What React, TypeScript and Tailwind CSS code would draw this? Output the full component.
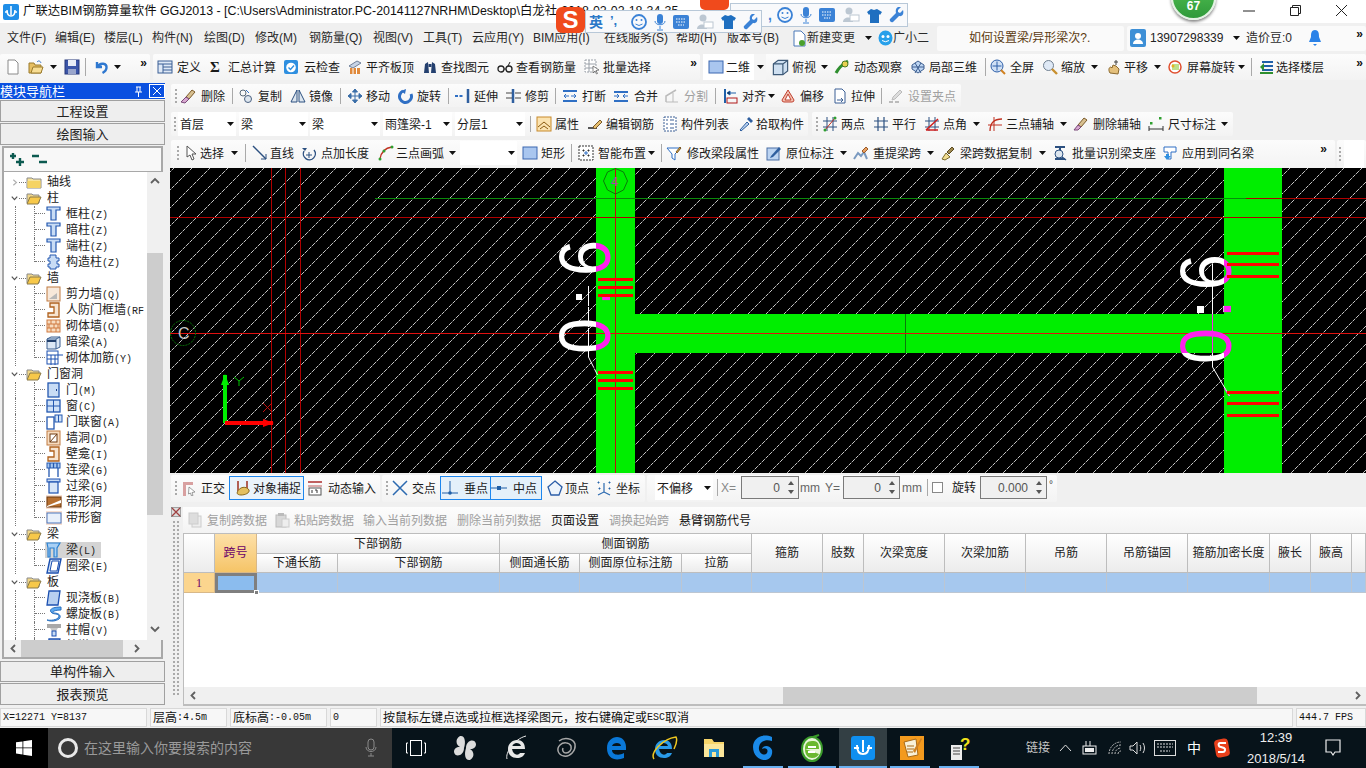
import React from "react";

type N = React.ReactNode;
const Sv = ({ c, s = 16 }: { c: N; s?: number }) => (
  <svg width={s} height={s} viewBox="0 0 16 16" className="shrink-0">{c}</svg>
);

const I: Record<string, N> = {
  new: <Sv c={<path d="M3 1h7l3 3v11H3z" fill="#fff" stroke="#8a8a8a" />} />,
  open: <Sv c={<><path d="M1 4h5l1 2h6v8H1z" fill="#e6bf63" stroke="#9a7a2c" /><path d="M3 14l2-6h10l-2 6z" fill="#f7dd94" stroke="#9a7a2c" /><path d="M9 3c2-2 3-1 4 1" stroke="#2f6fc4" fill="none" /></>} />,
  save: <Sv c={<><rect x="1" y="1" width="14" height="14" fill="#3b55a8" stroke="#27397a" /><rect x="4" y="1" width="8" height="6" fill="#e8ecf6" /><rect x="4" y="10" width="8" height="5" fill="#9aa6cc" /></>} />,
  undo: <Sv c={<path d="M3 3v5h5M3.5 8C6 3 13 4 12.5 9c-.3 2.5-2 4-4 5" fill="none" stroke="#2f78d0" strokeWidth="2.4" />} />,
  def: <Sv c={<><rect x="1" y="2" width="14" height="12" fill="#dfe9f6" stroke="#3a5f95" /><path d="M1 5h14M6 5v9M6 8h9M6 11h9" stroke="#3a5f95" /></>} />,
  sigma: <span className="text-[15px] font-bold leading-none font-['Liberation_Serif',serif]">Σ</span>,
  cloud: <Sv c={<><rect x="1" y="1" width="14" height="14" rx="2" fill="#2e8fe0" /><circle cx="8" cy="8.5" r="4.8" fill="#fff" /><path d="M5.5 8.5l2 2 3.5-4" stroke="#2e8fe0" strokeWidth="1.4" fill="none" /></>} />,
  flush: <Sv c={<><path d="M2 7l8-5 4 2-8 5z" fill="#c8d4e6" stroke="#6f7f99" /><rect x="3" y="9" width="10" height="6" fill="#e08a3c" /><path d="M6 9v6M9.500 9v6" stroke="#fff" /></>} />,
  bino: <Sv c={<><path d="M2 14l1-9 3-2 1 11zM14 14l-1-9-3-2-1 11z" fill="#24406f" /><rect x="6.500" y="5" width="3" height="3" fill="#24406f" /></>} />,
  glass: <Sv c={<><circle cx="4" cy="10" r="3" fill="none" stroke="#222" strokeWidth="1.3" /><circle cx="12" cy="10" r="3" fill="none" stroke="#222" strokeWidth="1.3" /><path d="M7 10h2M11 7l2-4" stroke="#222" /></>} />,
  batch: <Sv c={<><rect x="1" y="1" width="11" height="12" fill="#fff" stroke="#9aa0a8" strokeDasharray="2 1" /><path d="M1 5h11M1 9h11M5 1v12" stroke="#9aa0a8" /><path d="M9 7l6 4-3 .5 1.500 3-1 .5-1.500-3-2 2z" fill="#fff" stroke="#555" strokeWidth=".7" /></>} />,
  square: <Sv c={<rect x="1" y="2" width="14" height="12" fill="#a9c6ef" stroke="#3a66b0" />} />,
  cube: <Sv s={19} c={<><path d="M2 5l4-3h8v9l-4 3H2z" fill="#cfe0f1" stroke="#3e5a78" /><path d="M2 5h8v9M10 5l4-3" fill="none" stroke="#3e5a78" /></>} />,
  orbit: <Sv c={<><path d="M2 14C5 8 9 5 14 2" stroke="#2f8f2f" strokeWidth="3" fill="none" /><circle cx="11" cy="5" r="3" fill="#e8d050" stroke="#4a7a20" /></>} />,
  local3d: <Sv c={<><path d="M2 6l6-4 6 4v4l-6 4-6-4z" fill="#bcd4f2" stroke="#3e5f90" /><path d="M5 4l6 10M11 4L5 14M2 8h12" stroke="#3e5f90" /></>} />,
  full: <Sv c={<><circle cx="7" cy="7" r="6" fill="#cfe0f5" stroke="#2c5ea8" /><path d="M7 2.500v9M2.500 7h9" stroke="#2c5ea8" /><path d="M11 11l4 4" stroke="#d08020" strokeWidth="2" /></>} />,
  zoom: <Sv c={<><circle cx="6.500" cy="6.500" r="5" fill="#dfe9f6" stroke="#6f7f90" /><path d="M10 10l5 5" stroke="#c89030" strokeWidth="2.400" /></>} />,
  pan: <Sv c={<><path d="M4 14c-2-3-1-6 1-6l1 1 1-3 3 1 3 3-1 5z" fill="#e4c07c" stroke="#8c6a30" /><path d="M10 1v5M8 3h4" stroke="#444" /></>} />,
  rot: <Sv c={<><path d="M2 8a6 6 0 0112 0 6 6 0 01-12 0" fill="#fff" stroke="#e05030" strokeWidth="1.500" /><rect x="5" y="5" width="7" height="6" fill="#bfe08c" /><circle cx="6" cy="7" r="1.500" fill="#e8b020" /></>} />,
  floors: <Sv c={<><path d="M3 3h11M3 7h11M3 11h11" stroke="#1f5fa8" strokeWidth="2" /><path d="M1 14h13" stroke="#2f8f2f" strokeWidth="2" /><path d="M1 8l4-4v8z" fill="#2f8f2f" /></>} />,
  del: <Sv c={<><path d="M12 2l3 2-6 7-3-2z" fill="#d8c090" stroke="#7a5a2a" /><path d="M6 9l3 2-4 4-4-1z" fill="#d8a8d0" stroke="#7a4a7a" /></>} />,
  copy: <Sv c={<><circle cx="5" cy="5" r="3" fill="none" stroke="#5a6a7a" /><circle cx="10" cy="11" r="3.500" fill="#dde6ef" stroke="#4a6080" /><path d="M8 2l3 3" stroke="#2f6fc4" /></>} />,
  mirror: <Sv c={<><path d="M7 2L1 14h6zM9 2l6 12H9z" fill="#dde6ef" stroke="#2c5080" /></>} />,
  move: <Sv c={<path d="M8 1v14M1 8h14M8 1L5.500 4h5zM8 15l-2.500-3h5zM1 8l3-2.500v5zM15 8l-3-2.500v5z" fill="#3a6ea8" stroke="#3a6ea8" />} />,
  rotate: <Sv c={<><path d="M5 3a6 6 0 108 3" fill="none" stroke="#2f6fc4" strokeWidth="3" /><path d="M8 1L3 3l4 3z" fill="#2f6fc4" /></>} />,
  extend: <Sv c={<><path d="M0 8h8" stroke="#2f6fc4" strokeWidth="2" strokeDasharray="3 1.500" /><path d="M13 1v14" stroke="#2f5f9f" strokeWidth="2.500" /></>} />,
  trim: <Sv c={<><path d="M7 1v14" stroke="#2f5f9f" strokeWidth="2.500" /><path d="M0 5h6M0 10h6M9 5h6M9 10h6" stroke="#444" /></>} />,
  breakI: <Sv c={<><path d="M1 3h14M1 13h14" stroke="#2f6fc4" strokeWidth="2" /><path d="M2 8h5M9 8h5M4 6l-2 2 2 2M12 6l2 2-2 2" stroke="#2f6fc4" fill="none" /></>} />,
  merge: <Sv c={<><path d="M1 4h14M1 13h14" stroke="#2f6fc4" strokeWidth="2" /><path d="M1 8h5M10 8h5M4 6l2 2-2 2M12 6l-2 2 2 2" stroke="#2f6fc4" fill="none" /></>} />,
  split: <Sv c={<><path d="M2 14V8l10-6" fill="none" stroke="#bbb" strokeWidth="1.500" /><path d="M2 14h12M9 5v9" stroke="#bbb" /></>} />,
  align: <Sv c={<><path d="M3 1v14" stroke="#1f5fa8" strokeWidth="2" /><path d="M7 5h7M5 5l3-2v4z" stroke="#1f5fa8" /><rect x="5" y="10" width="10" height="5" fill="none" stroke="#b01818" /></>} />,
  offset: <Sv c={<><path d="M8 2l6 10a2 2 0 01-2 2H4a2 2 0 01-2-2z" fill="#f3c0b0" stroke="#c04030" /><path d="M8 6l3 6H5z" fill="#fff" stroke="#c04030" /></>} />,
  stretch: <Sv c={<><path d="M3 1h7l3 3v11H3z" fill="#fff" stroke="#3a5f95" /><path d="M5 12h6M9 10l2 2-2 2" stroke="#3a5f95" fill="none" /></>} />,
  grips: <Sv c={<><path d="M12 2l2 2-7 7-3 1 1-3z" fill="#ddd" stroke="#bbb" /><path d="M1 14h4M7 14h4" stroke="#bbb" strokeWidth="2" /></>} />,
  prop: <Sv c={<><rect x="1" y="1" width="14" height="14" fill="#fbe3b0" stroke="#c78a2c" /><path d="M2 11l6-5 6 5M4 13l4-3 4 3" stroke="#8a5a10" fill="none" /></>} />,
  rebar: <Sv c={<><path d="M1 12h9" stroke="#222" strokeWidth="1.500" /><path d="M6 11l7-7 2 2-7 7z" fill="#e8c070" stroke="#7a5a2a" /></>} />,
  list: <Sv c={<><rect x="2" y="1" width="12" height="14" fill="#fff" stroke="#3a5f95" strokeDasharray="2 1" /><path d="M4 4h2M8 4h4M4 8h2M8 8h4M4 12h2M8 12h4" stroke="#3a5f95" /></>} />,
  pick: <Sv c={<><path d="M2 14l7-8 2 2-8 7z" fill="#bcd4f2" stroke="#2f5f9f" /><path d="M9 3l4 4 2-2-4-4z" fill="#2f5f9f" /></>} />,
  twop: <Sv c={<><path d="M1 5h14M1 11h14M5 1v14M11 1v14" stroke="#2c5080" /><path d="M3 14L13 2" stroke="#c03020" /><circle cx="3" cy="14" r="1.500" fill="#2f9f2f" /><circle cx="13" cy="2" r="1.500" fill="#2f9f2f" /></>} />,
  para: <Sv c={<path d="M1 5h14M1 11h14M5 1v14M11 1v14" stroke="#2c5080" strokeWidth="1.200" />} />,
  ang: <Sv c={<><path d="M1 5h14M1 11h14M5 1v14M11 1v14" stroke="#2c5080" /><path d="M2 14L14 3M2 14h12" stroke="#d02020" strokeWidth="1.500" /></>} />,
  arc: <Sv c={<><path d="M3 15C3 7 7 3 15 3" fill="none" stroke="#c03020" strokeWidth="1.300" /><path d="M1 9h14M7 1v14" stroke="#c03020" /></>} />,
  delAx: <Sv c={<><path d="M11 2l3 2-6 7-3-2z" fill="#d8c090" stroke="#7a5a2a" /><path d="M5 9l3 2-3 3-4 0z" fill="#d8a8d0" stroke="#7a4a7a" /></>} />,
  dim: <Sv c={<><path d="M1 15V10M15 15V10M1 13h14" stroke="#333" /><rect x="2" y="6" width="2.500" height="2.500" fill="#2f9f2f" /><rect x="11" y="1" width="2.500" height="2.500" fill="#2f9f2f" /></>} />,
  cursor: <Sv c={<path d="M3 1v11l3-2 2 5 2-1-2-5h4z" fill="#fff" stroke="#555" />} />,
  line: <Sv c={<><path d="M1 1l13 13" stroke="#2c5080" strokeWidth="1.500" /><path d="M14 9v5H9" fill="none" stroke="#2c5080" /></>} />,
  ptlen: <Sv c={<><path d="M3 6a6 6 0 1010-1" fill="none" stroke="#2c5080" strokeWidth="1.400" /><path d="M8 7v6M5 10h6" stroke="#2c5080" /><path d="M1 3h5l-2 3z" fill="#2c5080" /></>} />,
  arc3: <Sv c={<><path d="M2 14C3 7 7 3 14 2" fill="none" stroke="#c03020" strokeWidth="1.300" /><circle cx="2" cy="14" r="1.500" fill="#2f9f2f" /><circle cx="6" cy="6" r="1.500" fill="#2f9f2f" /><circle cx="14" cy="2" r="1.500" fill="#2f9f2f" /></>} />,
  smart: <Sv c={<><rect x="1" y="1" width="14" height="14" fill="#fff" stroke="#333" strokeDasharray="2 1" /><path d="M5 5h1v1H5zM10 5h1v1h-1zM5 10h1v1H5zM10 10h1v1h-1z" stroke="#333" /><path d="M8 6v4M6 8h4" stroke="#2f6fc4" /></>} />,
  editSeg: <Sv c={<><path d="M1 3h14l-6 6v6l-3-2V9z" fill="#fff" stroke="#2f6fc4" /><path d="M10 7l4-5 1 1-4 5z" fill="#e8b040" stroke="#7a5a2a" /></>} />,
  orig: <Sv c={<><rect x="1" y="3" width="12" height="12" fill="#bcd4f2" stroke="#4a6fa5" /><path d="M5 11l8-9 2 2-8 8-3 1z" fill="#2f5f9f" /></>} />,
  re: <Sv c={<><path d="M1 14l4-6 3 3 3-4 3 7" fill="none" stroke="#7a9ac0" strokeWidth="2" /><path d="M9 6l4-4 2 2-4 4z" fill="#e8a060" stroke="#9a5a2a" /></>} />,
  cpData: <Sv c={<><path d="M2 14l4-6 4 4-5 3z" fill="#f0dc90" stroke="#7a6a2a" /><path d="M7 7l5-5 2 2-5 5z" fill="#a08a50" stroke="#5a4a20" /></>} />,
  batchSup: <Sv c={<><path d="M3 2h10M8 2v4M3 14h10" stroke="#2c5080" strokeWidth="2" /><circle cx="7" cy="9" r="4" fill="#dde6ef" stroke="#2c5080" /><path d="M10 12l4 3" stroke="#2c5080" strokeWidth="1.500" /></>} />,
  apply: <Sv c={<><path d="M2 2h12v5H9v7H6V7H2z" fill="#fff" stroke="#2f6fc4" /><path d="M5 15l-3-4h2V9h3v2h2z" fill="#2f8fe0" /></>} />,
  ortho: <Sv c={<><path d="M2 2h10v3H5v11H2z" fill="#d8a0a0" /><path d="M8 7l6 5-3 .5 1 3-1.500.5-1-3-2 1z" fill="#fff" stroke="#777" strokeWidth=".7" /></>} />,
  snap: <Sv c={<><path d="M3 1v10M12 1v10" stroke="#a03020" strokeWidth="1.500" /><path d="M2 13c2-7 10-7 12-3 1 3-4 5-8 5-2 0-4-1-4-2z" fill="#e4c060" stroke="#8a6a20" /></>} />,
  dyn: <Sv c={<><path d="M1 2h14" stroke="#c06060" strokeWidth="2" /><path d="M1 6h14" stroke="#c06060" /><rect x="2" y="8" width="12" height="7" fill="#fff" stroke="#555" /><path d="M5 10v3M8 10h2v3" stroke="#333" fill="none" /></>} />,
  cross: <Sv c={<path d="M1 1l14 14M15 1L1 15" stroke="#2c6ab0" strokeWidth="1.500" />} />,
  perp: <Sv c={<><path d="M8 1v12M0 13h16" stroke="#1f5fa8" /><circle cx="8" cy="13" r="1.800" fill="#1f5fa8" /></>} />,
  mid: <Sv c={<><path d="M0 8h16" stroke="#1f5fa8" /><rect x="6" y="6" width="4" height="4" fill="#1f5fa8" /></>} />,
  vert: <Sv c={<path d="M8 1l7 6-3 8H4L1 7z" fill="#eef4fb" stroke="#2c5ea8" strokeWidth="1.300" />} />,
  coord: <Sv c={<><path d="M8 3v9L2 15M8 12l6 3" stroke="#2c6ab0" strokeWidth="1.200" fill="none" /><path d="M2 2h1v1H2zM13 2h1v1h-1zM3 8h1v1H3zM13 8h1v1h-1z" stroke="#2c6ab0" /></>} />,
  cp1: <Sv c={<><rect x="5" y="4" width="9" height="11" fill="#eee" stroke="#ccc" /><rect x="2" y="1" width="9" height="11" fill="#ddd" stroke="#ccc" /></>} />,
  cp2: <Sv c={<><rect x="2" y="3" width="10" height="12" fill="#d8d8d8" stroke="#bbb" /><rect x="4" y="1" width="6" height="3" fill="#bbb" /><rect x="8" y="7" width="7" height="8" fill="#eee" stroke="#ccc" /></>} />,
};

const Ca = ({ w }: { w: string }) => (
  <div className={`flex items-center justify-center shrink-0 h-full ${w}`}>
    <svg width="7" height="4" viewBox="0 0 7 4"><path d="M0 0h7L3.500 4z" fill="#111" /></svg>
  </div>
);
const Sp = ({ w }: { w: string }) => (
  <div className={`flex items-center justify-center shrink-0 h-full ${w}`}>
    <div className="w-px h-[70%] bg-[#a9a9a9]" />
  </div>
);
const Dots = ({ n = 4 }: { n?: number }) => (
  <div className="flex flex-col gap-[2px]">
    {Array.from({ length: n }).map((_, i) => <div key={i} className="w-[2px] h-[2px] bg-[#aaaaaa]" />)}
  </div>
);
const Grip = ({ w }: { w: string }) => (
  <div className={`flex items-center justify-center shrink-0 h-full ${w}`}><Dots /></div>
);
const More = ({ c }: { c: string }) => (
  <span className={`text-[12px] font-bold leading-none text-[#111] shrink-0 font-['Liberation_Sans',sans-serif] ${c}`}>»</span>
);
const T = ({ w, ib = "w-[19px]", i, l, dim }: { w: string; ib?: string; i?: string; l: string; dim?: boolean }) => (
  <div className={`flex items-center h-full shrink-0 ${w} ${dim ? "text-[#a0a0a0]" : ""}`}>
    <span className={`flex items-center shrink-0 ${ib}`}>{i ? I[i] : null}</span>
    <span className="whitespace-nowrap pt-[2px]">{l}</span>
  </div>
);
const Combo = ({ w, l }: { w: string; l?: string }) => (
  <div className={`flex items-center justify-between h-full shrink-0 bg-white pl-[2px] pr-[1px] ${w}`}>
    <span className="whitespace-nowrap pt-[2px]">{l}</span>
    <Ca w="w-[10px]" />
  </div>
);
const panel = "bg-linear-to-b from-[#fcfcfc] to-[#f3f3f3] rounded-[2px] flex items-center shrink-0";

const Menu = ({ w, l }: { w: string; l: string }) => <span className={`shrink-0 whitespace-nowrap ${w}`}>{l}</span>;

function TitleBar() {
  return (
    <div className="h-[23px] bg-white flex items-center shrink-0 pl-[3px]">
      <svg width="16" height="16" viewBox="0 0 16 16" className="shrink-0 mr-[4px]">
        <rect width="16" height="16" rx="2" fill="#1f8ee8" />
        <path d="M8 2v9M4 6c0 4 1 6 4 6s4-2 4-6M2 8h3M11 8h3" stroke="#fff" strokeWidth="1.500" fill="none" />
      </svg>
      <span className="whitespace-nowrap text-[12.4px] text-[#111]">{"广联达BIM钢筋算量软件 GGJ2013 - [C:\\Users\\Administrator.PC-20141127NRHM\\Desktop\\白龙社-2018-02-02-18-34-35"}</span>
      <div className="ml-auto flex items-center text-[#222] mb-[2px]">
        <svg width="12" height="2" viewBox="0 0 12 2" className="mr-[35px]"><path d="M0 1h12" stroke="#222" /></svg>
        <svg width="11" height="11" viewBox="0 0 11 11" className="mr-[35px]"><path d="M.5 2.500h8v8h-8zM2.500 2.500v-2h8v8h-2" fill="none" stroke="#222" /></svg>
        <svg width="11" height="11" viewBox="0 0 11 11" className="mr-[19px]"><path d="M0 0l11 11M11 0L0 11" stroke="#222" /></svg>
      </div>
    </div>
  );
}

function MenuBar() {
  return (
    <div className="h-[30px] flex items-center shrink-0 pl-[7px] text-[#2a2a2a]">
      <Menu w="w-[48px]" l="文件(F)" />
      <Menu w="w-[49px]" l="编辑(E)" />
      <Menu w="w-[48px]" l="楼层(L)" />
      <Menu w="w-[52px]" l="构件(N)" />
      <Menu w="w-[51px]" l="绘图(D)" />
      <Menu w="w-[54px]" l="修改(M)" />
      <Menu w="w-[64px]" l="钢筋量(Q)" />
      <Menu w="w-[50px]" l="视图(V)" />
      <Menu w="w-[49px]" l="工具(T)" />
      <Menu w="w-[61px]" l="云应用(Y)" />
      <Menu w="w-[71px]" l="BIM应用(I)" />
      <Menu w="w-[72px]" l="在线服务(S)" />
      <Menu w="w-[51px]" l="帮助(H)" />
      <Menu w="w-[66px]" l="版本号(B)" />
      <span className="w-[14px] shrink-0 flex">
        <svg width="13" height="17" viewBox="0 0 13 17"><path d="M1 1h7l4 4v11H1z" fill="#fff" stroke="#4a78b8" /><circle cx="9" cy="13" r="3" fill="#4aa02c" /></svg>
      </span>
      <Menu w="w-[51px]" l="新建变更" />
      <Ca w="w-[20px]" />
      <span className="w-[15px] shrink-0 flex">
        <svg width="15" height="17" viewBox="0 0 15 17"><ellipse cx="7.500" cy="8" rx="7" ry="7.500" fill="#27a0ea" /><circle cx="5" cy="6.500" r="1.500" fill="#fff" /><circle cx="10" cy="6.500" r="1.500" fill="#fff" /><path d="M4 10.500q3.500 2.500 7 0" stroke="#fff" fill="none" /></svg>
      </span>
      <Menu w="w-[44px]" l="广小二" />
      <div className="w-[187px] h-[25px] bg-[#fafafa] flex items-center pl-[32px] text-[#5c3a10] shrink-0 whitespace-nowrap rounded-[2px]">如何设置梁/异形梁次?.</div>
      <div className="ml-[3px] flex-1 h-[25px] bg-[#fafafa] flex items-center pl-[3px] rounded-[2px]">
        <svg width="16" height="18" viewBox="0 0 16 18" className="mr-[4px] shrink-0"><rect width="16" height="18" rx="2" fill="#3d8fd6" /><circle cx="8" cy="7" r="3" fill="#fff" /><path d="M3 15c0-6 10-6 10 0z" fill="#fff" /></svg>
        <span className="w-[76px] text-[#222] shrink-0">13907298339</span>
        <Ca w="w-[20px]" />
        <span className="w-[62px] shrink-0 whitespace-nowrap">造价豆:0</span>
        <svg width="14" height="18" viewBox="0 0 14 18" className="shrink-0"><path d="M7 1c4 0 4 4 4 7l2 5H1l2-5c0-3 0-7 4-7zM5 15h4l-2 2z" fill="#2a82e8" /></svg>
        <More c="ml-auto mr-[3px] mb-[8px]" />
      </div>
    </div>
  );
}

function Row1() {
  return (
    <div className="h-[28px] flex items-center shrink-0 py-[1px]">
      <div className={`${panel} h-[26px] w-[150px] pl-[5px]`}>
        <T w="w-[23px]" ib="w-[16px]" i="new" l="" />
        <T w="w-[17px]" ib="w-[17px]" i="open" l="" />
        <Ca w="w-[16px]" />
        <T w="w-[21px] ml-[3px]" ib="w-[16px]" i="save" l="" />
        <Sp w="w-[1px] mr-[8px]" />
        <T w="w-[18px]" ib="w-[16px]" i="undo" l="" />
        <Ca w="w-[10px]" />
        <More c="ml-auto mr-[3px] mb-[8px]" />
      </div>
      <div className={`${panel} h-[26px] w-[547px] ml-[3px] pl-[4px]`}>
        <T w="w-[53px]" ib="w-[20px]" i="def" l="定义" />
        <T w="w-[73px]" ib="w-[18px]" i="sigma" l="汇总计算" />
        <T w="w-[64px]" ib="w-[21px]" i="cloud" l="云检查" />
        <T w="w-[75px]" i="flush" l="平齐板顶" />
        <T w="w-[75px]" i="bino" l="查找图元" />
        <T w="w-[87px]" i="glass" l="查看钢筋量" />
        <T w="w-[67px]" i="batch" l="批量选择" />
        <More c="ml-auto mr-[3px] mb-[8px]" />
      </div>
      <div className={`${panel} h-[26px] flex-1 ml-[3px]`}>
        <div className="flex h-full bg-white shrink-0 pl-[5px] w-[51px]">
          <T w="w-[46px]" ib="w-[18px]" i="square" l="二维" />
        </div>
        <Ca w="w-[12px] bg-[#f5f5f5]" />
        <T w="w-[45px] ml-[5px]" ib="w-[21px]" i="cube" l="俯视" />
        <Ca w="w-[16px]" />
        <T w="w-[76px] ml-[2px]" ib="w-[20px]" i="orbit" l="动态观察" />
        <T w="w-[72px]" i="local3d" l="局部三维" />
        <Sp w="w-[6px]" />
        <T w="w-[52px] ml-[2px]" ib="w-[20px]" i="full" l="全屏" />
        <T w="w-[43px]" i="zoom" l="缩放" />
        <Ca w="w-[18px]" />
        <T w="w-[42px] ml-[3px]" ib="w-[18px]" i="pan" l="平移" />
        <Ca w="w-[18px]" />
        <T w="w-[68px] ml-[1px]" ib="w-[20px]" i="rot" l="屏幕旋转" />
        <Ca w="w-[12px]" />
        <Sp w="w-[8px]" />
        <T w="w-[65px] ml-[4px]" ib="w-[17px]" i="floors" l="选择楼层" />
        <More c="ml-auto mr-[3px] mb-[8px]" />
      </div>
    </div>
  );
}

function Row2() {
  return (
    <div className={`${panel} h-[23px] w-[790px] ml-[6px] pt-[1px]`}>
      <Grip w="w-[9px]" />
      <T w="w-[47px]" ib="w-[21px]" i="del" l="删除" />
      <Sp w="w-[11px]" />
      <T w="w-[44px]" ib="w-[20px]" i="copy" l="复制" />
      <T w="w-[43px] ml-[8px]" i="mirror" l="镜像" />
      <Sp w="w-[14px]" />
      <T w="w-[43px]" i="move" l="移动" />
      <T w="w-[43px] ml-[8px]" i="rotate" l="旋转" />
      <Sp w="w-[14px]" />
      <T w="w-[43px]" i="extend" l="延伸" />
      <T w="w-[43px] ml-[8px]" i="trim" l="修剪" />
      <Sp w="w-[13px]" />
      <T w="w-[44px]" ib="w-[20px]" i="breakI" l="打断" />
      <T w="w-[45px] ml-[7px]" ib="w-[21px]" i="merge" l="合并" />
      <T w="w-[44px] ml-[6px]" ib="w-[20px]" i="split" l="分割" dim />
      <Sp w="w-[14px]" />
      <T w="w-[44px]" ib="w-[20px]" i="align" l="对齐" />
      <Ca w="w-[10px]" />
      <T w="w-[44px] ml-[4px]" ib="w-[20px]" i="offset" l="偏移" />
      <T w="w-[43px] ml-[8px]" i="stretch" l="拉伸" />
      <Sp w="w-[13px]" />
      <T w="w-[68px]" ib="w-[20px]" i="grips" l="设置夹点" dim />
    </div>
  );
}

function Row3() {
  return (
    <div className="flex items-center h-[24px] ml-[6px]">
      <div className={`${panel} h-full w-[637px]`}>
        <Grip w="w-[7px]" />
        <Combo w="w-[58px]" l="首层" />
        <Combo w="w-[69px] ml-[3px]" l="梁" />
        <Combo w="w-[70px] ml-[2px]" l="梁" />
        <Combo w="w-[69px] ml-[3px]" l="雨篷梁-1" />
        <Combo w="w-[70px] ml-[3px]" l="分层1" />
        <Sp w="w-[11px]" />
        <T w="w-[43px]" i="prop" l="属性" />
        <T w="w-[67px] ml-[8px]" i="rebar" l="编辑钢筋" />
        <T w="w-[67px] ml-[8px]" i="list" l="构件列表" />
        <T w="w-[66px] ml-[9px]" ib="w-[18px]" i="pick" l="拾取构件" />
      </div>
      <div className={`${panel} h-full w-[421px] ml-[4px]`}>
        <Grip w="w-[10px]" />
        <T w="w-[43px]" i="twop" l="两点" />
        <T w="w-[43px] ml-[8px]" i="para" l="平行" />
        <T w="w-[43px] ml-[8px]" i="ang" l="点角" />
        <Ca w="w-[18px]" />
        <T w="w-[67px] ml-[2px]" i="arc" l="三点辅轴" />
        <Ca w="w-[19px]" />
        <T w="w-[68px]" ib="w-[20px]" i="delAx" l="删除辅轴" />
        <T w="w-[68px] ml-[7px]" ib="w-[20px]" i="dim" l="尺寸标注" />
        <Ca w="w-[17px]" />
      </div>
    </div>
  );
}

function Row4() {
  return (
    <div className="flex items-center h-[28px] ml-[6px]">
      <div className={`${panel} h-full w-[1164px] pb-[2px]`}>
        <Grip w="w-[13px]" />
        <T w="w-[40px]" ib="w-[16px]" i="cursor" l="选择" />
        <Ca w="w-[20px]" />
        <Sp w="w-[2px]" />
        <T w="w-[42px] ml-[6px]" ib="w-[18px]" i="line" l="直线" />
        <T w="w-[68px] ml-[7px]" ib="w-[20px]" i="ptlen" l="点加长度" />
        <T w="w-[66px] ml-[9px]" ib="w-[18px]" i="arc3" l="三点画弧" />
        <Ca w="w-[16px]" />
        <div className="h-[24px]"><Combo w="w-[57px] h-full" /></div>
        <T w="w-[43px] ml-[5px]" i="square" l="矩形" />
        <Sp w="w-[13px]" />
        <T w="w-[68px]" ib="w-[20px]" i="smart" l="智能布置" />
        <Ca w="w-[10px]" />
        <Sp w="w-[10px]" />
        <T w="w-[93px]" ib="w-[21px]" i="editSeg" l="修改梁段属性" />
        <T w="w-[68px] ml-[7px]" ib="w-[20px]" i="orig" l="原位标注" />
        <Ca w="w-[19px]" />
        <T w="w-[68px]" ib="w-[20px]" i="re" l="重提梁跨" />
        <Ca w="w-[19px]" />
        <T w="w-[92px]" ib="w-[20px]" i="cpData" l="梁跨数据复制" />
        <Ca w="w-[20px]" />
        <T w="w-[104px]" ib="w-[20px]" i="batchSup" l="批量识别梁支座" />
        <T w="w-[92px] ml-[6px]" ib="w-[20px]" i="apply" l="应用到同名梁" />
        <More c="ml-auto mr-[8px] mb-[8px]" />
      </div>
      <div className={`${panel} h-full flex-1 ml-[2px]`}>
        <Grip w="w-[5px]" />
        <div className="flex-1 h-full bg-white mr-[2px] ml-[2px]" />
      </div>
    </div>
  );
}

function CanvasView() {
  const txt = (x: number, y: number, ls: number) => (
    <text transform={`translate(${x} ${y}) rotate(-90) scale(.9 1)`} fontFamily="Liberation Sans, sans-serif" fontSize="72" letterSpacing={ls}>0.6</text>
  );
  return (
    <svg viewBox="170 168 1196 305" width="1196" height="305" className="block shrink-0 bg-black">
      <defs>
        <pattern id="h" width="18" height="18" patternUnits="userSpaceOnUse">
          <path d="M-1 19L19 -1" stroke="#c8c8c8" strokeWidth="1" strokeDasharray="4 1" />
        </pattern>
        <clipPath id="g"><rect x="596" y="168" width="39" height="305" /><rect x="1224" y="168" width="58" height="305" /><rect x="635" y="314" width="589" height="39" /></clipPath>
        <clipPath id="n"><path clipRule="evenodd" d="M170 168h1196v305H170zM596 168v305h39V353h589v120h58V168h-58v146H635V168z" /></clipPath>
      </defs>
      <rect x="170" y="168" width="1196" height="305" fill="url(#h)" />
      <g stroke="#b00000" strokeWidth="1">
        <path d="M271.500 168v305M285.500 168v305M300.500 168v305" />
        <path d="M170 217.500h1196" />
        <path d="M1246 198.500h120" />
      </g>
      <path d="M375 198.500h871" stroke="#0a8a0a" />
      <rect x="596" y="168" width="39" height="305" fill="#00ee00" />
      <rect x="1224" y="168" width="58" height="305" fill="#00ee00" />
      <rect x="635" y="314" width="589" height="39" fill="#00ee00" />
      <path d="M596 198.500h39M1224 198.500h22" stroke="#0a8a0a" />
      <path d="M1246 198.500h36" stroke="#b00000" />
      <path d="M596 217.500h39M1224 217.500h58" stroke="#b00000" />
      <path d="M615.500 168v305" stroke="#c01010" />
      <path d="M905.500 314v39" stroke="#0a7a0a" />
      <path d="M170 333.500h1196" stroke="#e01010" />
      <path d="M615.500 168.500l8 3.500 4 9-4 9-8 4-8-4-4-9 4-9z" fill="none" stroke="#0a7a0a" />
      <text x="611" y="186" fontSize="13" fontFamily="Liberation Sans, sans-serif" fill="#a050a0">4</text>
      <circle cx="183" cy="333" r="12.500" fill="none" stroke="#0a7a0a" strokeDasharray="2 1" />
      <text x="178" y="339" fontSize="16" fontFamily="Liberation Sans, sans-serif" fill="#c8c8c8">C</text>
      <path d="M225 423v-48" stroke="#00ee00" strokeWidth="4" />
      <path d="M225 374l-4 11h8z" fill="#00ee00" />
      <path d="M225 423h48" stroke="#ff0000" strokeWidth="4" />
      <path d="M274 423l-11-4v8z" fill="#ff0000" />
      <path d="M234 377l5 4 5-4M239 381v5" stroke="#00c000" fill="none" />
      <path d="M263 403l9 9M272 403l-9 9" stroke="#c01010" />
      <g clipPath="url(#n)" fill="#fff">{txt(610, 354, 13.300)}{txt(1231, 364, 11)}</g>
      <g clipPath="url(#g)" fill="#ff22ee">{txt(610, 354, 13.300)}{txt(1231, 364, 11)}</g>
      <rect x="576" y="294" width="6" height="6" fill="#fff" />
      <rect x="1197" y="306" width="7" height="7" fill="#fff" />
      <path d="M588.500 286v71l9 18" stroke="#fff" fill="none" strokeDasharray="20 1" />
      <path d="M1212.500 264v103l17 29" stroke="#fff" fill="none" />
      <path d="M1212.500 314v39M1224 388l5 8" stroke="#ff22ee" />
      <g fill="#ff0000">
        <rect x="598" y="278" width="35" height="3" /><rect x="598" y="286" width="35" height="3" /><rect x="598" y="294" width="35" height="3" />
        <rect x="598" y="371" width="35" height="3" /><rect x="598" y="379" width="35" height="3" /><rect x="598" y="387" width="35" height="3" />
        <rect x="1227" y="252" width="52" height="3" /><rect x="1227" y="263" width="52" height="3" /><rect x="1227" y="275" width="52" height="3" />
        <rect x="1227" y="391" width="52" height="3" /><rect x="1227" y="402" width="52" height="3" /><rect x="1227" y="414" width="52" height="3" />
      </g>
    </svg>
  );
}

const Spin = ({ w, v }: { w: string; v: string }) => (
  <div className={`h-[23px] border border-[#7a7a7a] bg-[#f0f0f0] flex items-center justify-end shrink-0 text-[#555] ${w}`}>
    <span className="font-['Liberation_Sans',sans-serif] text-[12px] mr-[5px]">{v}</span>
    <div className="w-[12px] flex flex-col items-center gap-[5px] mr-[1px]">
      <svg width="6" height="4" viewBox="0 0 6 4"><path d="M0 4h6L3 0z" fill="#555" /></svg>
      <svg width="6" height="4" viewBox="0 0 6 4"><path d="M0 0h6L3 4z" fill="#555" /></svg>
    </div>
  </div>
);

function SnapBar() {
  return (
    <div className="h-[34px] flex items-start pt-[2px] shrink-0 ml-[6px]">
      <div className={`${panel} h-[27px] w-[209px] pb-[2px]`}>
        <Grip w="w-[10px]" />
        <T w="w-[44px]" ib="w-[20px]" i="ortho" l="正交" />
        <div className="flex items-center h-[24px] w-[75px] ml-[4px] border border-[#1c86ee] bg-[#eaf3fb] pl-[5px] shrink-0">
          <span className="w-[18px]">{I.snap}</span><span className="whitespace-nowrap pt-[2px]">对象捕捉</span>
        </div>
        <T w="w-[68px] ml-[3px]" ib="w-[21px]" i="dyn" l="动态输入" />
      </div>
      <div className={`${panel} h-[27px] w-[263px] ml-[2px] pb-[2px]`}>
        <Grip w="w-[10px]" />
        <T w="w-[44px]" ib="w-[20px]" i="cross" l="交点" />
        <div className="flex items-center h-[24px] w-[51px] ml-[4px] border border-[#1c86ee] bg-[#e4f0fa] shrink-0 pl-[1px]">
          <span className="w-[22px]">{I.perp}</span><span className="whitespace-nowrap pt-[2px]">垂点</span>
        </div>
        <div className="flex items-center h-[24px] w-[51px] border border-l-0 border-[#1c86ee] bg-[#e4f0fa] shrink-0">
          <span className="w-[22px]">{I.mid}</span><span className="whitespace-nowrap pt-[2px]">中点</span>
        </div>
        <T w="w-[42px] ml-[5px]" ib="w-[18px]" i="vert" l="顶点" />
        <T w="w-[44px] ml-[7px]" ib="w-[20px]" i="coord" l="坐标" />
      </div>
      <div className={`${panel} h-[27px] flex-none w-[410px] ml-[2px] pl-[8px] pb-[2px]`}>
        <Combo w="w-[58px]" l="不偏移" />
        <Sp w="w-[9px]" />
        <span className="text-[#888] font-['Liberation_Sans',sans-serif] w-[18px] shrink-0 ml-[-1px] mr-[2px]">X=</span>
        <Spin w="w-[58px]" v="0" />
        <span className="text-[#666] font-['Liberation_Sans',sans-serif] w-[26px] pl-[1px] shrink-0">mm</span>
        <span className="text-[#666] font-['Liberation_Sans',sans-serif] w-[18px] shrink-0">Y=</span>
        <Spin w="w-[57px]" v="0" />
        <span className="text-[#666] font-['Liberation_Sans',sans-serif] w-[24px] pl-[2px] shrink-0">mm</span>
        <Sp w="w-[6px]" />
        <div className="w-[11px] h-[11px] border border-[#888] bg-white shrink-0 ml-[2px]" />
        <span className="ml-[9px] w-[28px] shrink-0 whitespace-nowrap">旋转</span>
        <Spin w="w-[67px]" v="0.000" />
        <span className="text-[10px] ml-[2px] mb-[6px] text-[#444] font-['Liberation_Sans',sans-serif]">°</span>
      </div>
    </div>
  );
}

const H = ({ c, t }: { c: string; t?: string }) => (
  <div className={`flex items-center justify-center bg-linear-to-b from-white to-[#ececec] border-r border-b border-[#bdbdbd] whitespace-nowrap text-[#222] ${c}`}>{t}</div>
);
const Cell = () => <div className="bg-[#a6c8ee] border-r border-b border-[#bcc6d2]" />;

function Table() {
  const tops: [string, string][] = [
    ["箍筋", "col-[8] row-[1/3]"], ["肢数", "col-[9] row-[1/3]"], ["次梁宽度", "col-[10] row-[1/3]"], ["次梁加筋", "col-[11] row-[1/3]"], ["吊筋", "col-[12] row-[1/3]"], ["吊筋锚固", "col-[13] row-[1/3]"], ["箍筋加密长度", "col-[14] row-[1/3]"], ["腋长", "col-[15] row-[1/3]"], ["腋高", "col-[16] row-[1/3]"], ["", "col-[17] row-[1/3]"],
  ];
  return (
    <div className="grid grid-cols-[31px_42px_81px_162px_80px_102px_70px_71px_41px_81px_81px_81px_81px_82px_41px_41px_14px] grid-rows-[20px_19px_20px] shrink-0 w-[1182px] border-t border-[#bdbdbd]">
      <H c="col-[1] row-[1/3]" />
      <div className="col-[2] row-[1/3] flex items-center justify-center bg-linear-to-b from-[#fde0a8] to-[#f5c466] text-[#6a006a] border-r border-b border-[#d8b888]">跨号</div>
      <H c="col-[3/5] row-[1]" t="下部钢筋" />
      <H c="col-[5/8] row-[1]" t="侧面钢筋" />
      <H c="col-[3] row-[2]" t="下通长筋" />
      <H c="col-[4] row-[2]" t="下部钢筋" />
      <H c="col-[5] row-[2]" t="侧面通长筋" />
      <H c="col-[6] row-[2]" t="侧面原位标注筋" />
      <H c="col-[7] row-[2]" t="拉筋" />
      {tops.map(([t, c]) => <H key={c} c={c} t={t} />)}
      <div className="col-[1] row-[3] flex items-center justify-center bg-[#fbd58e] text-[#6a006a] border-r border-b border-[#d8b888] font-['Liberation_Serif',serif]">1</div>
      <div className="col-[2] row-[3] relative bg-[#8bbcee] border-[3px] border-[#7f7f7f]">
        <div className="absolute right-[-5px] bottom-[-5px] w-[5px] h-[5px] bg-[#7f7f7f] border border-white" />
      </div>
      {Array.from({ length: 15 }).map((_, i) => <Cell key={i} />)}
    </div>
  );
}

function BottomPanel() {
  return (
    <div className="flex h-[201px] shrink-0 ml-[5px]">
      <div className="w-[12px] shrink-0 flex flex-col items-center pt-0 gap-[4px]">
        <svg width="10" height="10" viewBox="0 0 10 10"><rect width="10" height="10" fill="#ddd" stroke="#666" /><path d="M1 1l8 8M9 1L1 9" stroke="#a04040" strokeWidth="1.300" /></svg>
        <div className="flex gap-[2px] overflow-hidden h-[180px]"><Dots n={44} /><Dots n={44} /></div>
      </div>
      <div className="flex flex-col flex-1 ml-[1px]">
        <div className="h-[26px] bg-linear-to-b from-[#fdfdfd] to-[#f3f3f3] flex items-center shrink-0 text-[#a0a0a0] pl-[4px]">
          <T w="w-[80px]" ib="w-[20px]" i="cp1" l="复制跨数据" />
          <T w="w-[80px] ml-[7px]" ib="w-[20px]" i="cp2" l="粘贴跨数据" />
          <span className="ml-[9px] w-[84px] shrink-0 whitespace-nowrap pt-[2px]">输入当前列数据</span>
          <span className="ml-[10px] w-[84px] shrink-0 whitespace-nowrap pt-[2px]">删除当前列数据</span>
          <span className="ml-[10px] w-[48px] shrink-0 whitespace-nowrap text-[#111] pt-[2px]">页面设置</span>
          <span className="ml-[10px] w-[60px] shrink-0 whitespace-nowrap pt-[2px]">调换起始跨</span>
          <span className="ml-[10px] shrink-0 whitespace-nowrap text-[#111] pt-[2px]">悬臂钢筋代号</span>
        </div>
        <div className="flex-1 bg-white border-l border-b-2 border-[#bdbdbd] flex flex-col mb-[2px]">
          <Table />
          <div className="flex-1" />
          <div className="h-[17px] bg-[#f0f0f0] flex items-center shrink-0 relative">
            <svg width="9" height="9" viewBox="0 0 9 9" className="ml-[5px] shrink-0"><path d="M6 1L2.500 4.500 6 8" stroke="#606060" strokeWidth="1.800" fill="none" /></svg>
            <div className="ml-[585px] w-[474px] h-full bg-[#cdcdcd] shrink-0" />
            <svg width="9" height="9" viewBox="0 0 9 9" className="ml-auto mr-[4px] shrink-0"><path d="M3 1l3.500 3.500L3 8" stroke="#606060" strokeWidth="1.800" fill="none" /></svg>
          </div>
        </div>
      </div>
    </div>
  );
}

const Col: N = <svg width="15" height="16" viewBox="0 0 15 16"><path d="M1 1h13v3H10v10H5V4H1z" fill="#c8dcf5" stroke="#2458b0" strokeWidth="1.200" /></svg>;
const treeIcons: Record<string, N> = {
  col: Col,
  gz: <svg width="15" height="16" viewBox="0 0 15 16"><path d="M4 1h6v3h3v3h-2v3h2v3h-3v2H4v-2H2v-3h2V7H2V4h2z" fill="#c8dcf5" stroke="#2458b0" /></svg>,
  jlq: <svg width="15" height="16" viewBox="0 0 15 16"><rect x="1" y="1" width="13" height="14" fill="#f7e8da" stroke="#c07a40" /><path d="M3 13l8-6v6z" fill="#b8b8b8" /></svg>,
  rf: <svg width="15" height="16" viewBox="0 0 15 16"><path d="M4 1h9v14H2v-4h6V5H4z" fill="#f7e4d0" stroke="#b0601c" strokeWidth="1.300" /></svg>,
  qt: <svg width="15" height="16" viewBox="0 0 15 16"><rect x="1" y="2" width="13" height="12" fill="#f7dcc0" stroke="#d07a40" /><path d="M1 6h13M1 10h13M5 2v4M10 2v4M3 6v4M8 6v4M12 6v4M5 10v4M10 10v4" stroke="#d07a40" /></svg>,
  al: <svg width="15" height="16" viewBox="0 0 15 16"><path d="M1 5l4-2h9v10l-4 2H1z" fill="#dce8f5" stroke="#3a5f90" /><path d="M1 5h9v10M10 5l4-2" fill="none" stroke="#3a5f90" /><path d="M1 7h9" stroke="#22406c" strokeWidth="2" /></svg>,
  jj: <svg width="17" height="16" viewBox="0 0 17 16"><rect x="1" y="1" width="11" height="13" fill="#fff" stroke="#1c50b0" /><path d="M1 5h16M5 5v10M9 5v10M1 9h11" stroke="#1c50b0" /></svg>,
  door: <svg width="15" height="16" viewBox="0 0 15 16"><rect x="2" y="1" width="11" height="14" fill="#c8dcf5" stroke="#2458b0" strokeWidth="1.300" /><rect x="10" y="7" width="1" height="2" fill="#1c408c" /></svg>,
  win: <svg width="15" height="16" viewBox="0 0 15 16"><rect x="1" y="2" width="13" height="12" fill="#cfe2f8" stroke="#2458b0" strokeWidth="1.300" /><path d="M7.500 2v12M1 8h13" stroke="#2458b0" /></svg>,
  mlc: <svg width="17" height="16" viewBox="0 0 17 16"><rect x="1" y="3" width="7" height="12" fill="#fff" stroke="#2458b0" strokeWidth="1.300" /><rect x="9" y="1" width="7" height="7" fill="#cfe2f8" stroke="#2458b0" /><path d="M12.500 1v7" stroke="#2458b0" /></svg>,
  qd: <svg width="15" height="16" viewBox="0 0 15 16"><rect x="1" y="1" width="13" height="14" fill="#f7dcc0" stroke="#c07a40" /><rect x="4" y="4" width="7" height="8" fill="#fff" stroke="#703a10" /><path d="M4 12l7-8" stroke="#703a10" /></svg>,
  ll: <svg width="15" height="16" viewBox="0 0 15 16"><rect x="1" y="1" width="13" height="5" fill="#a8c8f0" stroke="#2458b0" /><path d="M4 1v5M7.500 1v5M11 1v5M3 6v9M12 6v9" stroke="#2458b0" strokeWidth="1.300" /></svg>,
  gl: <svg width="15" height="16" viewBox="0 0 15 16"><rect x="1" y="1" width="13" height="3" fill="#c8dcf5" stroke="#1c50b0" /><rect x="3" y="4" width="9" height="11" fill="#d8e6f8" stroke="#1c50b0" strokeWidth="1.200" /></svg>,
  dxd: <svg width="16" height="16" viewBox="0 0 16 16"><rect x="0" y="1" width="16" height="14" fill="#f8dfd0" /><rect x="1" y="3" width="14" height="10" fill="#b87030" stroke="#6a3a10" /><path d="M1 12l14-6v3L1 13z" fill="#fff" /></svg>,
  dxc: <svg width="16" height="16" viewBox="0 0 16 16"><rect x="0" y="1" width="16" height="14" fill="#f8dfd0" /><rect x="1" y="3" width="14" height="10" fill="#e8f0fb" stroke="#4a78c0" /></svg>,
  l: <svg width="15" height="16" viewBox="0 0 15 16"><path d="M1 1h13l-3 5v9H8V6H4v9H2V6z" fill="#a8d0f5" stroke="#2a80d0" strokeWidth="1.200" /></svg>,
  ql: <svg width="16" height="16" viewBox="0 0 16 16"><path d="M4 1h11l-3 14H1z" fill="#d8e6f8" stroke="#1c50b0" strokeWidth="1.400" /><path d="M6 3h7l-2 10H4z" fill="#fff" stroke="#1c50b0" /></svg>,
  xjb: <svg width="15" height="16" viewBox="0 0 15 16"><path d="M3 1h11l-2 14H1z" fill="#b8d0f0" stroke="#1c50b0" strokeWidth="1.300" /></svg>,
  lxb: <svg width="16" height="16" viewBox="0 0 16 16"><path d="M15 1C7 1 3 3 5 6s8 1 8 4-6 5-12 4c4 2 9 1 12-1 3-3 0-6-5-6-3 0-1-3 7-3z" fill="#5aa8f0" stroke="#2a70c0" /></svg>,
  zm: <svg width="16" height="16" viewBox="0 0 16 16"><rect x="1" y="2" width="14" height="4" fill="#a8a8a8" /><path d="M4 6h8l-2 3H6z" fill="#c8c8c8" /><rect x="6" y="9" width="4" height="5" fill="#c8dcf5" stroke="#1c50b0" /></svg>,
};

const Name = ({ a, b }: { a: string; b?: string }) => (
  <span className="whitespace-nowrap text-[#222]">{a}{b && <span className="font-['Liberation_Mono',monospace] text-[10px]">{b}</span>}</span>
);
const Chev = ({ open }: { open?: boolean }) => (
  <svg width="9" height="7" viewBox="0 0 9 9" className="shrink-0">
    {open ? <path d="M1 2l3.500 4L8 2" stroke="#555" strokeWidth="1.500" fill="none" /> : <path d="M3 1l4 3.500L3 8" stroke="#b0b0b0" strokeWidth="1.500" fill="none" />}
  </svg>
);
const FolderI = ({ open }: { open?: boolean }) => (
  <svg width="16" height="13" viewBox="0 0 16 13" className="shrink-0">
    {open ? <><path d="M1 2h5l1 1h6v8H1z" fill="#f1d78a" stroke="#8a8a8a" /><path d="M1 12l3-7h11l-3 7z" fill="#f7c84a" stroke="#8a7a4a" /></> : <><path d="M1 2h5l1 1h8v9H1z" fill="#f7e39a" stroke="#8a8a8a" /><rect x="1.500" y="5" width="13" height="7" fill="#f5d363" /></>}
  </svg>
);
const Group = ({ l, open = true }: { l: string; open?: boolean }) => (
  <div className="h-4 flex items-center shrink-0">
    <div className="w-[5px] shrink-0" />
    <div className="w-[10px] shrink-0 flex justify-center"><Chev open={open} /></div>
    <div className="w-[7px] border-b border-dotted border-[#777] shrink-0" />
    <FolderI open={open} />
    <div className="ml-[5px]"><Name a={l} /></div>
  </div>
);
const Leaf = ({ i, a, b, last, cur }: { i: string; a: string; b?: string; last?: boolean; cur?: boolean }) => (
  <div className="h-4 flex items-stretch shrink-0">
    <div className="w-[12px] shrink-0 border-r border-dotted border-[#777]" />
    <div className={`w-[19px] shrink-0 ${last ? "h-[8px] border-r border-dotted border-[#777]" : "border-r border-dotted border-[#777]"}`} />
    <div className="w-[10px] h-[8px] shrink-0 border-b border-dotted border-[#777]" />
    <div className={`flex items-center h-full shrink-0 pl-[1px] ${cur ? "bg-[#d4d4d4] w-[56px]" : ""}`}>
      <span className="w-[20px] shrink-0 flex">{treeIcons[i]}</span>
      <Name a={a} b={b} />
    </div>
  </div>
);

function LeftCol() {
  return (
    <div className="w-[165px] shrink-0 flex flex-col pt-[2px]">
      <div className="h-[16px] bg-[#0a50e0] flex items-center text-white text-[13px] leading-none shrink-0 whitespace-nowrap overflow-hidden">
        <span>模块导航栏</span>
        <svg width="9" height="11" viewBox="0 0 9 11" className="ml-auto mr-[6px]"><path d="M2 1h5M3 1v5M6 1v5M1 6h7M4.500 6v5" stroke="#fff" /></svg>
        <div className="w-[16px] h-[14px] border border-white flex items-center justify-center">
          <svg width="8" height="8" viewBox="0 0 8 8"><path d="M0 0l8 8M8 0L0 8" stroke="#fff" /></svg>
        </div>
      </div>
      <div className="h-[22px] mt-[1px] shrink-0 border border-[#a0a0a0] bg-[#eeeeee] flex items-center justify-center text-[13px] text-[#222]">工程设置</div>
      <div className="h-[22px] mt-[1px] shrink-0 border border-[#a0a0a0] bg-[#eeeeee] flex items-center justify-center text-[13px] text-[#222]">绘图输入</div>
      <div className="mt-[1px] h-[513px] shrink-0 border-2 border-[#a8a8a8] mx-[2px] bg-white flex flex-col">
        <div className="h-[24px] flex items-center pl-[4px] gap-[3px] shrink-0 bg-[#f8f8f8] border-b border-[#a8a8a8]">
          <svg width="17" height="15" viewBox="0 0 17 15"><path d="M2 4h6M5 1v6M8 10h8M12 6v8" stroke="#0c5a50" strokeWidth="2.400" /></svg>
          <svg width="17" height="15" viewBox="0 0 17 15" className="ml-[3px]"><path d="M1 4h7M8 10h8" stroke="#0c5a50" strokeWidth="2.400" /></svg>
        </div>
        <div className="flex h-[468px] shrink-0">
          <div className="w-[143px] shrink-0 overflow-hidden flex flex-col pt-[2px] text-[12px] leading-none">
            <Group l="轴线" open={false} />
            <Group l="柱" />
            <Leaf i="col" a="框柱" b="(Z)" />
            <Leaf i="col" a="暗柱" b="(Z)" />
            <Leaf i="col" a="端柱" b="(Z)" />
            <Leaf i="gz" a="构造柱" b="(Z)" last />
            <Group l="墙" />
            <Leaf i="jlq" a="剪力墙" b="(Q)" />
            <Leaf i="rf" a="人防门框墙" b="(RF" />
            <Leaf i="qt" a="砌体墙" b="(Q)" />
            <Leaf i="al" a="暗梁" b="(A)" />
            <Leaf i="jj" a="砌体加筋" b="(Y)" last />
            <Group l="门窗洞" />
            <Leaf i="door" a="门" b="(M)" />
            <Leaf i="win" a="窗" b="(C)" />
            <Leaf i="mlc" a="门联窗" b="(A)" />
            <Leaf i="qd" a="墙洞" b="(D)" />
            <Leaf i="rf" a="壁龛" b="(I)" />
            <Leaf i="ll" a="连梁" b="(G)" />
            <Leaf i="gl" a="过梁" b="(G)" />
            <Leaf i="dxd" a="带形洞" />
            <Leaf i="dxc" a="带形窗" last />
            <Group l="梁" />
            <Leaf i="l" a="梁" b="(L)" cur />
            <Leaf i="ql" a="圈梁" b="(E)" last />
            <Group l="板" />
            <Leaf i="xjb" a="现浇板" b="(B)" />
            <Leaf i="lxb" a="螺旋板" b="(B)" />
            <Leaf i="zm" a="柱帽" b="(V)" />
            <Leaf i="xjb" a="柱墩" b="(X)" />
          </div>
          <div className="w-[16px] shrink-0 bg-[#f0f0f0] flex flex-col items-center">
            <svg width="10" height="8" viewBox="0 0 10 8" className="mt-[5px] mb-[68px] shrink-0"><path d="M1 6l4-4 4 4" stroke="#606060" strokeWidth="1.800" fill="none" /></svg>
            <div className="w-full h-[262px] bg-[#cdcdcd] shrink-0" />
            <svg width="10" height="8" viewBox="0 0 10 8" className="mt-[110px] shrink-0"><path d="M1 2l4 4 4-4" stroke="#606060" strokeWidth="1.800" fill="none" /></svg>
          </div>
        </div>
        <div className="h-[17px] bg-[#f0f0f0] flex items-center shrink-0">
          <svg width="9" height="9" viewBox="0 0 9 9" className="ml-[5px] shrink-0"><path d="M6 1L2.500 4.500 6 8" stroke="#606060" strokeWidth="1.800" fill="none" /></svg>
          <div className="ml-[3px] w-[102px] h-full bg-[#cdcdcd] shrink-0" />
          <svg width="9" height="9" viewBox="0 0 9 9" className="ml-[9px] shrink-0"><path d="M3 1l3.500 3.500L3 8" stroke="#606060" strokeWidth="1.800" fill="none" /></svg>
        </div>
      </div>
      <div className="h-[21px] mt-[2px] shrink-0 border border-[#a0a0a0] bg-[#eeeeee] flex items-center justify-center text-[13px] text-[#222]">单构件输入</div>
      <div className="h-[22px] mt-[1px] shrink-0 border border-[#a0a0a0] bg-[#eeeeee] flex items-center justify-center text-[13px] text-[#222]">报表预览</div>
    </div>
  );
}

const Stat = ({ c, children }: { c: string; children: N }) => (
  <div className={`h-[19px] bg-[#f7f7f7] border border-[#d8d8d8] flex items-center pl-[2px] shrink-0 whitespace-nowrap overflow-hidden ${c}`}>{children}</div>
);
const Mono = ({ t }: { t: string }) => <span className="font-['Liberation_Mono',monospace] text-[10px]">{t}</span>;

function StatusBar() {
  return (
    <div className="h-[20px] flex items-start gap-[3px] shrink-0 text-[#111]">
      <Stat c="w-[147px]"><Mono t="X=12271 Y=8137" /></Stat>
      <Stat c="w-[77px]">层高<Mono t=":4.5m" /></Stat>
      <Stat c="w-[97px]">底标高<Mono t=":-0.05m" /></Stat>
      <Stat c="w-[47px]"><Mono t="0" /></Stat>
      <Stat c="w-[913px]">按鼠标左键点选或拉框选择梁图元，按右键确定或<Mono t="ESC" />取消</Stat>
      <Stat c="flex-1"><Mono t="444.7 FPS" /></Stat>
    </div>
  );
}

const Slot = ({ c, children }: { c: string; children: N }) => (
  <div className={`h-full flex items-center justify-center shrink-0 relative ${c}`}>{children}</div>
);

function Taskbar() {
  return (
    <div className="h-[40px] bg-[#07131a] flex items-center shrink-0 text-white">
      <div className="w-[48px] h-full bg-black flex items-center justify-center shrink-0">
        <svg width="16" height="16" viewBox="0 0 16 16"><path d="M0 2.300l6.500-.9v6.100H0zM7.300 1.300L16 0v7.500H7.300zM0 8.300h6.500v6.200L0 13.600zM7.300 8.300H16V16l-8.700-1.200z" fill="#fff" /></svg>
      </div>
      <div className="w-[344px] h-full bg-[#383838] flex items-center shrink-0">
        <div className="w-[20px] h-[20px] rounded-full border-[3px] border-[#e8e8e8] ml-[10px] shrink-0" />
        <span className="ml-[6px] text-[14px] text-[#9a9a9a] whitespace-nowrap">在这里输入你要搜索的内容</span>
        <svg width="12" height="20" viewBox="0 0 12 20" className="ml-auto mr-[15px]"><rect x="3" y="1" width="6" height="11" rx="3" fill="none" stroke="#8a8a8a" /><path d="M1 9c0 6 10 6 10 0M6 15v3M3 18h6" stroke="#8a8a8a" fill="none" /></svg>
      </div>
      <Slot c="w-[48px]">
        <svg width="20" height="16" viewBox="0 0 20 16"><rect x="4.500" y=".5" width="11" height="15" fill="none" stroke="#fff" /><path d="M2 3H.5v10H2M18 3h1.500v10H18" stroke="#fff" fill="none" /></svg>
      </Slot>
      <Slot c="w-[50px]">
        <svg width="22" height="26" viewBox="0 0 22 26"><path d="M10 13C2 13 0 4 6 1c5-1 6 6 4 12zM12 13c0-8 9-10 10-4 0 5-5 6-10 4zM12 13c8 0 10 9 4 12-5 1-6-6-4-12zM10 13c0 8-9 10-10 4 0-5 5-6 10-4z" fill="#dcdcdc" /></svg>
      </Slot>
      <Slot c="w-[53px]">
        <svg width="22" height="26" viewBox="0 0 22 26"><path d="M2 14h17c0-6-3-9-8-9S2 9 2 14c0 6 4 9 9 9 4 0 7-2 8-5h-5c-2 3-7 2-8-4M6 11c1-4 8-4 9 0z" fill="#e8e8e8" fillRule="evenodd" /><path d="M1 24C-1 18 8 4 20 1" stroke="#e8e8e8" fill="none" /></svg>
      </Slot>
      <Slot c="w-[45px]">
        <svg width="22" height="24" viewBox="0 0 22 24"><path d="M4 5c5-4 14-3 16 3 1 7-5 13-11 12S1 13 5 9c3-3 9-3 11 1 1 4-2 7-5 7s-4-3-3-5" fill="none" stroke="#a8a8a8" strokeWidth="1.500" /></svg>
      </Slot>
      <Slot c="w-[55px]">
        <svg width="22" height="24" viewBox="0 0 22 24"><path d="M2 12c0-7 5-11 10-11 5 0 9 4 9 10v3H7c0 5 7 6 12 3v5c-7 3-17 2-17-10zM7 10h9c0-4-8-4-9 0z" fill="#0a78d8" fillRule="evenodd" /></svg>
      </Slot>
      <Slot c="w-[44px]">
        <svg width="26" height="26" viewBox="0 0 26 26"><path d="M3 14h17c0-6-3-9-8-9S3 9 3 14c0 6 4 9 9 9 4 0 7-2 8-5h-5c-2 3-7 2-8-4M7 11c1-4 8-4 9 0z" fill="#2a9ae8" fillRule="evenodd" /><path d="M2 24C-2 18 10 4 24 2c2 4-1 10-2 12" stroke="#f0c820" strokeWidth="1.500" fill="none" /></svg>
      </Slot>
      <Slot c="w-[54px]">
        <svg width="22" height="22" viewBox="0 0 22 22"><path d="M1 2h8l2 3h10v15H1z" fill="#f7d56a" /><rect x="1" y="7" width="20" height="13" fill="#fbe69a" /><rect x="6" y="12" width="10" height="8" fill="#2a9ad8" /><rect x="9" y="15" width="4" height="5" fill="#fbe69a" /></svg>
      </Slot>
      <Slot c="w-[44px]">
        <svg width="24" height="28" viewBox="0 0 24 28"><path d="M21 3C11-1 2 4 2 13c0 8 6 13 11 13 6 0 9-5 8-10-2-5-9-5-10-1 3-2 7 0 5 4-3 4-9 0-8-6 1-6 7-8 13-6z" fill="#1a8ae8" /></svg>
        <div className="absolute bottom-0 left-[2px] right-[2px] h-[2px] bg-[#6ab0f0]" />
      </Slot>
      <Slot c="w-[54px]">
        <svg width="22" height="28" viewBox="0 0 22 28"><ellipse cx="11" cy="15" rx="10" ry="12" fill="#e8f5d8" stroke="#3a9a2a" strokeWidth="2" /><path d="M4 15h14c0-7-2-8-7-8s-7 3-7 8c0 6 3 9 7 9s6-2 7-4" fill="#6ab830" /><path d="M7 13h8M7 18h7" stroke="#fff" strokeWidth="2" /><path d="M12 3l6-2" stroke="#3a9a2a" strokeWidth="2" /></svg>
        <div className="absolute bottom-0 left-[3px] right-[3px] h-[2px] bg-[#6ab0f0]" />
      </Slot>
      <Slot c="w-[48px] bg-[#333f44]">
        <svg width="24" height="24" viewBox="0 0 24 24"><rect width="24" height="24" rx="3" fill="#0f8ff0" /><path d="M12 4v12M6 9c0 6 2 9 6 9s6-3 6-9M3 12h5M16 12h5" stroke="#fff" strokeWidth="2" fill="none" /></svg>
        <div className="absolute bottom-0 left-0 right-0 h-[2px] bg-[#6ab0f0]" />
      </Slot>
      <Slot c="w-[49px]">
        <svg width="26" height="26" viewBox="0 0 26 26"><rect x="1" y="1" width="24" height="24" fill="#f39a1e" /><path d="M5 7l12-3 2 16-10 2z" fill="#f8f0d8" stroke="#a86a18" /><path d="M8 11h7M8 14h7M8 17h6" stroke="#a86a18" /><path d="M14 16l8-13 1 1-7 14z" fill="#d08020" /></svg>
        <div className="absolute bottom-0 left-[3px] right-[6px] h-[2px] bg-[#6ab0f0]" />
      </Slot>
      <Slot c="w-[49px]">
        <svg width="22" height="26" viewBox="0 0 22 26"><rect x="1" y="10" width="11" height="15" fill="#ececec" /><path d="M3 13h7M3 16h7M3 19h7" stroke="#444" /><text x="10" y="15" fontSize="17" fontWeight="bold" fill="#f3e31a" fontFamily="Liberation Sans, sans-serif">?</text></svg>
        <div className="absolute bottom-0 left-[3px] right-[6px] h-[2px] bg-[#6ab0f0]" />
      </Slot>
      <div className="flex items-center ml-[41px] h-full shrink-0">
        <span className="text-[12px] text-[#c8c8c8] w-[33px] shrink-0">链接</span>
        <svg width="13" height="8" viewBox="0 0 13 8" className="mr-[10px] shrink-0"><path d="M1 7l5.500-6L12 7" stroke="#ddd" fill="none" /></svg>
        <svg width="16" height="14" viewBox="0 0 16 14" className="mr-[10px] shrink-0"><rect x="1" y="5" width="13" height="8" fill="none" stroke="#eee" /><rect x="3" y="7" width="9" height="4" fill="#eee" /><path d="M4 0v5M8 0v5" stroke="#eee" /></svg>
        <svg width="14" height="14" viewBox="0 0 14 14" className="mr-[7px] shrink-0"><path d="M1 13a12 12 0 0112-12M4 13a9 9 0 019-9M7 13a6 6 0 016-6M10 13a3 3 0 013-3" stroke="#bbb" fill="none" strokeDasharray="2 1" /></svg>
        <svg width="16" height="14" viewBox="0 0 16 14" className="mr-[9px] shrink-0"><path d="M1 5h3l4-4v12l-4-4H1zM11 4c1 2 1 4 0 6M14 2c2 3 2 7 0 10" stroke="#ddd" fill="none" /></svg>
        <svg width="22" height="16" viewBox="0 0 22 16" className="mr-[11px] shrink-0"><rect x=".5" y=".5" width="21" height="15" fill="none" stroke="#ddd" /><path d="M3 4h16M3 7h16M6 11h10" stroke="#ddd" strokeDasharray="2 1" /></svg>
        <span className="text-[14px] w-[24px] shrink-0 text-white">中</span>
        <svg width="16" height="20" viewBox="0 0 16 20" className="ml-[3px] shrink-0"><rect x="1" y="1" width="14" height="18" rx="4" fill="#e8401c" transform="rotate(-10 8 10)" /><path d="M12 5H6c-2 0-2 4 1 4l3 1c2 1 1 4-1 4H4" stroke="#fff" strokeWidth="2" fill="none" /></svg>
        <div className="ml-[10px] w-[72px] shrink-0 flex flex-col items-center leading-[21px] text-[13px] text-[#eee] font-['Liberation_Sans',sans-serif]">
          <span>12:39</span>
          <span>2018/5/14</span>
        </div>
        <svg width="16" height="18" viewBox="0 0 16 18" className="ml-[13px] shrink-0"><path d="M1 1h14v12h-5l-2 3-2-3H1z" fill="none" stroke="#eee" strokeWidth="1.200" /></svg>
      </div>
    </div>
  );
}

const Smile = ({ c = "#3b82d6" }: { c?: string }) => (
  <svg width="16" height="16" viewBox="0 0 16 16" className="shrink-0"><circle cx="8" cy="8" r="7" fill="none" stroke={c} strokeWidth="1.800" /><circle cx="5.500" cy="6" r="1" fill={c} /><circle cx="10.500" cy="6" r="1" fill={c} /><path d="M4.500 10q3.500 3 7 0" stroke={c} fill="none" /></svg>
);
const ImeIcons = () => (
  <>
    <Smile />
    <svg width="12" height="18" viewBox="0 0 12 18" className="shrink-0"><rect x="3" y="1" width="6" height="10" rx="3" fill="#3b82d6" /><path d="M1 8c0 5 10 5 10 0M6 13v3M3 17h6" stroke="#3b82d6" fill="none" /></svg>
    <svg width="16" height="14" viewBox="0 0 16 14" className="shrink-0"><rect width="16" height="14" rx="2" fill="#3b82d6" /><path d="M3 4h10M3 7h10M5 10h6" stroke="#fff" strokeDasharray="1.500 1" /></svg>
    <svg width="18" height="18" viewBox="0 0 18 18" className="shrink-0"><circle cx="7" cy="5" r="3.500" fill="#bcc7d2" /><path d="M1 16c0-6 10-6 10 0z" fill="#bcc7d2" /><rect x="8" y="9" width="9" height="6" fill="#fff" stroke="#bcc7d2" /></svg>
    <svg width="15" height="15" viewBox="0 0 15 15" className="shrink-0"><path d="M4 1l3 1 3-1 5 3-2 3-1-1v9H3V6L2 7 0 4z" fill="#1f6fc0" /></svg>
    <svg width="15" height="16" viewBox="0 0 15 16" className="shrink-0"><path d="M14 3l-3 3-2-1 0-2 3-3C8-1 6 2 7 6L1 12c-1 2 1 4 3 3l6-6c4 1 5-3 4-6z" fill="#3b82d6" /></svg>
  </>
);

export default function App() {
  return (
    <div className="w-[1366px] h-[768px] overflow-hidden relative flex flex-col bg-[#f0f0f0] text-[12px] leading-none text-[#1a1a1a] font-['Liberation_Sans','Noto_Sans_CJK_SC',sans-serif]">
      <TitleBar />
      <MenuBar />
      <Row1 />
      <div className="flex h-[627px] shrink-0">
        <LeftCol />
        <div className="flex flex-col flex-1 min-w-0 pt-[3px]">
          <Row2 />
          <div className="h-[5px] shrink-0" />
          <Row3 />
          <div className="h-[4px] shrink-0" />
          <Row4 />
          <div className="ml-[5px] shrink-0"><CanvasView /></div>
          <SnapBar />
          <BottomPanel />
        </div>
      </div>
      <StatusBar />
      <Taskbar />

      <div className="absolute left-[1171px] top-[-26px] w-[45px] h-[46px] rounded-full bg-linear-to-b from-[#58c858] to-[#2f9a3a] border-2 border-[#e4f2e4] shadow-[0_2px_3px_#888] flex items-end justify-center pb-[6px] text-white font-bold text-[12px] font-['Liberation_Sans',sans-serif]">67</div>

      <div className="absolute left-[730px] top-[3px] w-[178px] h-[24px] bg-[#f8f9fb] border border-[#b8c8d8] flex items-center justify-end gap-[7px] pr-[3px]">
        <span className="text-[#3b82d6] font-bold text-[14px] mr-[-2px]">,</span>
        <ImeIcons />
      </div>
      <div className="absolute left-[700px] top-[-6px] w-[29px] h-[16px] bg-[#f04a1c] rounded-[5px]" />
      <div className="absolute left-[585px] top-[10px] w-[177px] h-[23px] bg-[#f8f9fb] border border-[#b8c8d8] flex items-center gap-[7px] pl-[3px]">
        <span className="text-[#2a78c8] font-bold text-[14px]">英</span>
        <span className="text-[#2a78c8] font-bold text-[13px] w-[14px] pb-[3px]">’,</span>
        <ImeIcons />
      </div>
      <div className="absolute left-[556px] top-[7px] w-[29px] h-[26px] bg-[#f04a1c] rounded-[6px] flex items-center justify-center text-white font-bold text-[24px] font-['Liberation_Sans',sans-serif]">S</div>
    </div>
  );
}
